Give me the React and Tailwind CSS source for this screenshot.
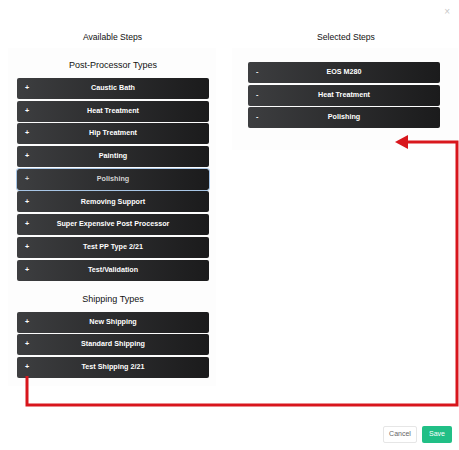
import React from 'react';

const postProcessors = [
  'Caustic Bath',
  'Heat Treatment',
  'Hip Treatment',
  'Painting',
  'Polishing',
  'Removing Support',
  'Super Expensive Post Processor',
  'Test PP Type 2/21',
  'Test/Validation',
];

const shippingTypes = ['New Shipping', 'Standard Shipping', 'Test Shipping 2/21'];

const selectedSteps = ['EOS M280', 'Heat Treatment', 'Polishing'];

function StepRow({ label, sign, active }) {
  return (
    <div
      className={
        'relative flex h-[21px] items-center rounded-[2px] bg-gradient-to-r from-[#3d3e40] to-[#1b1b1c] px-[8px] text-[7.2px] font-bold ' +
        (active ? 'text-[#d4d4d4] outline outline-1 outline-[#a8c6e6]' : 'text-white')
      }
    >
      <span className="w-[10px]">{sign}</span>
      <span className="flex-1 pr-[10px] text-center">{label}</span>
    </div>
  );
}

export default function App() {
  return (
    <div className="relative h-[450px] w-[459px] overflow-hidden bg-white font-['Liberation_Sans',Arial,sans-serif] text-[#111]">
      <div className="absolute right-[9px] top-[4px] text-[10px] text-[#c8c8c8]">×</div>

      <div className="flex pt-[31px]">
        <div className="ml-[8px] w-[208px]">
          <h3 className="h-[17px] pl-[1px] text-center text-[8.6px] leading-[12px]">Available Steps</h3>
          <div className="bg-[#fdfdfd] px-[9px] pb-[8px] pl-[9px] pr-[7px]">
            <h4 className="pt-[11px] pb-[7px] text-center text-[9px] leading-[12px]">Post-Processor Types</h4>
            <div className="flex flex-col gap-[1.7px]">
              {postProcessors.map((p) => (
                <StepRow key={p} label={p} sign="+" active={p === 'Polishing'} />
              ))}
            </div>
            <h4 className="pt-[12px] pb-[7px] text-center text-[9px] leading-[12px]">Shipping Types</h4>
            <div className="flex flex-col gap-[1.7px]">
              {shippingTypes.map((p) => (
                <StepRow key={p} label={p} sign="+" />
              ))}
            </div>
          </div>
        </div>

        <div className="ml-[16px] w-[226px]">
          <h3 className="h-[17px] pl-[2px] text-center text-[8.6px] leading-[12px]">Selected Steps</h3>
          <div className="h-[102px] bg-[#fdfdfd] pl-[16px] pr-[18px] pt-[14px]">
            <div className="flex flex-col gap-[1.5px]">
              {selectedSteps.map((p) => (
                <StepRow key={p} label={p} sign="-" />
              ))}
            </div>
          </div>
        </div>
      </div>

      <div className="absolute bottom-[7px] right-[7px] flex gap-[5px]">
        <button className="h-[17px] w-[34px] rounded-[2px] border border-[#e6e6e6] bg-white text-[7px] text-[#666]">
          Cancel
        </button>
        <button className="h-[17px] w-[30px] rounded-[2px] bg-[#21bf86] text-[7px] text-white">Save</button>
      </div>

      <svg className="pointer-events-none absolute inset-0" width="459" height="450" viewBox="0 0 459 450">
        <path d="M27 376 V405 H457 V142 H405" fill="none" stroke="#d8161c" strokeWidth="3" />
        <polygon points="395,142 408,135 408,149" fill="#d8161c" />
      </svg>
    </div>
  );
}
